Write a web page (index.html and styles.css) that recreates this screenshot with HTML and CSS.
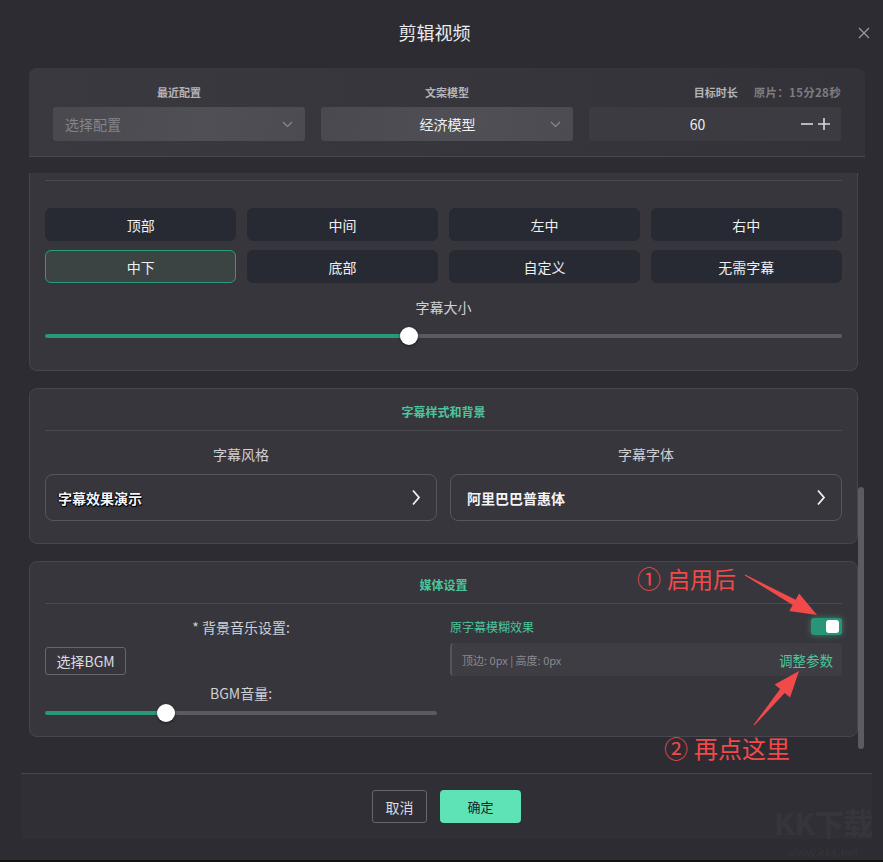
FILE: index.html
```html
<!DOCTYPE html>
<html lang="zh">
<head>
<meta charset="utf-8">
<title>剪辑视频</title>
<link rel="stylesheet" href="styles.css">
</head>
<body>
<div class="dialog">
  <header class="dlg-head">
    <h1 class="dlg-title">剪辑视频</h1>
    <svg class="close" width="12" height="12" viewBox="0 0 12 12"><path d="M1 1L11 11M11 1L1 11" stroke="#9a9a9e" stroke-width="1.3" fill="none"/></svg>
  </header>

  <div class="dlg-body">
    <section class="config">
      <div class="cfg-col">
        <div class="cfg-label">最近配置</div>
        <div class="select light">
          <span class="placeholder">选择配置</span>
          <svg class="chev-down" width="11" height="7" viewBox="0 0 11 7"><path d="M1 1L5.5 5.5L10 1" stroke="#8c8b90" stroke-width="1.1" fill="none"/></svg>
        </div>
      </div>
      <div class="cfg-col">
        <div class="cfg-label">文案模型</div>
        <div class="select light center">
          <span class="value">经济模型</span>
          <svg class="chev-down" width="11" height="7" viewBox="0 0 11 7"><path d="M1 1L5.5 5.5L10 1" stroke="#8c8b90" stroke-width="1.1" fill="none"/></svg>
        </div>
      </div>
      <div class="cfg-col">
        <div class="cfg-label right"><span>目标时长</span><span class="orig">原片：15分28秒</span></div>
        <div class="select dark number">
          <span class="value">60</span>
          <span class="steps">
            <svg width="12" height="12" viewBox="0 0 12 12"><path d="M0 6H12" stroke="#d8d8da" stroke-width="1.6"/></svg>
            <svg width="12" height="12" viewBox="0 0 12 12"><path d="M0 6H12M6 0V12" stroke="#d8d8da" stroke-width="1.6"/></svg>
          </span>
        </div>
      </div>
    </section>

    <div class="scroll-row">
      <div class="cards">
        <section class="card card-cut">
          <div class="divider"></div>
          <div class="pos-grid">
            <button class="pos">顶部</button>
            <button class="pos">中间</button>
            <button class="pos">左中</button>
            <button class="pos">右中</button>
            <button class="pos active">中下</button>
            <button class="pos">底部</button>
            <button class="pos">自定义</button>
            <button class="pos">无需字幕</button>
          </div>
          <div class="field-label size-label">字幕大小</div>
          <div class="slider big">
            <div class="track fill-part"></div>
            <div class="thumb"></div>
            <div class="track rest"></div>
          </div>
        </section>

        <section class="card style-card">
          <div class="card-title">字幕样式和背景</div>
          <div class="divider"></div>
          <div class="two-col">
            <div class="col">
              <div class="field-label">字幕风格</div>
              <div class="pick">
                <span class="pick-text shadowed">字幕效果演示</span>
                <svg width="10" height="17" viewBox="0 0 10 17"><path d="M2 1.5L8 8.5L2 15.5" stroke="#f2f2f2" stroke-width="1.8" fill="none"/></svg>
              </div>
            </div>
            <div class="col">
              <div class="field-label">字幕字体</div>
              <div class="pick">
                <span class="pick-text">阿里巴巴普惠体</span>
                <svg width="10" height="17" viewBox="0 0 10 17"><path d="M2 1.5L8 8.5L2 15.5" stroke="#f2f2f2" stroke-width="1.8" fill="none"/></svg>
              </div>
            </div>
          </div>
        </section>

        <section class="card media-card">
          <div class="card-title">媒体设置</div>
          <div class="divider"></div>
          <div class="two-col">
            <div class="col">
              <div class="field-label bgm-label">* 背景音乐设置:</div>
              <div class="bgm-row"><button class="bgm-btn">选择BGM</button></div>
              <div class="field-label vol-label">BGM音量:</div>
              <div class="slider small">
                <div class="track fill-part"></div>
                <div class="thumb"></div>
                <div class="track rest"></div>
              </div>
            </div>
            <div class="col">
              <div class="blur-row">
                <span class="blur-label">原字幕模糊效果</span>
                <span class="toggle"><span class="knob"></span></span>
              </div>
              <div class="blur-box">
                <span class="blur-info">顶边: 0px | 高度: 0px</span>
                <span class="adjust">调整参数</span>
              </div>
            </div>
          </div>
        </section>
      </div>
      <div class="scrollbar"><div class="sb-thumb"></div></div>
    </div>
  </div>

  <footer class="dlg-foot">
    <button class="btn-cancel">取消</button>
    <button class="btn-ok">确定</button>
  </footer>
</div>

<div class="note note1"><span class="circ">①</span>启用后</div>
<div class="note note2"><span class="circ">②</span>再点这里</div>
<svg class="arrows" width="883" height="862" viewBox="0 0 883 862">
  <polygon fill="#f24a4a" points="745.2,574.6 795.7,599.7 799.1,593.5 817,615 789.3,611.1 792.7,604.9 744.8,575.4"/>
  <polygon fill="#f24a4a" points="754.4,725.3 784.7,692.9 790.1,697.4 799,671 774.7,684.6 780.1,689.1 753.6,724.7"/>
</svg>
<div class="watermark"><div class="wm-logo">KK下载</div><div class="wm-url">www.kkx.net</div></div>
</body>
</html>
```

FILE: styles.css
```css
* { box-sizing: border-box; }
html, body { margin: 0; padding: 0; }
body {
  width: 883px;
  height: 862px;
  background: #2d2c32;
  font-family: "Noto Sans CJK SC", "Noto Sans", sans-serif;
  color: #e6e6e8;
  overflow: hidden;
  position: relative;
  border-bottom: 2px solid #111114;
}
button { font-family: inherit; cursor: pointer; }

.dialog { display: flex; flex-direction: column; height: 860px; }

.dlg-head {
  height: 68px;
  display: flex;
  align-items: center;
  justify-content: center;
  position: relative;
  padding: 0 14px 4px 0;
}
.dlg-title { margin: 0; font-size: 18px; font-weight: 400; color: #ececee; line-height: 24px; }
.close { position: absolute; right: 13px; top: 27px; }

.dlg-body { padding: 0 18px 0 29px; }

/* config */
.config {
  display: grid;
  grid-template-columns: repeat(3, 1fr);
  column-gap: 16px;
  padding: 16px 24px 15px;
  background: linear-gradient(100deg, #3a393f 0%, #36353b 60%, #333238 100%);
  border-radius: 8px 8px 0 0;
  border-bottom: 1px solid #4a494f;
}
.cfg-label {
  height: 16px;
  line-height: 16px;
  font-size: 11px;
  font-weight: 700;
  color: #b4b3b8;
  text-align: center;
  margin-bottom: 7px;
  white-space: nowrap;
}
.cfg-label.right { text-align: right; }
.cfg-label .orig { color: #7d7c82; margin-left: 16px; font-size: 11.5px; letter-spacing: 0.3px; }
.select {
  height: 34px;
  border-radius: 3px;
  display: flex;
  align-items: center;
  padding: 0 12px;
  font-size: 14px;
  position: relative;
}
.select.light { background: linear-gradient(100deg, #4a494f 0%, #504f55 60%, #4c4b51 100%); }
.select.dark { background: #3c3b41; }
.placeholder { color: #85848a; flex: 1; }
.select.center .value { flex: 1; text-align: center; color: #f0f0f2; padding-left: 12px; }
.chev-down { margin-left: auto; margin-right: 0; }
.select.number .value { flex: 1; text-align: center; color: #eeeef0; padding-right: 7px; }
.steps { display: flex; gap: 5px; align-items: center; margin-right: -1px; }

/* scroll area */
.scroll-row { display: flex; height: 594px; }
.cards { width: 829px; padding-top: 16px; display: flex; flex-direction: column; gap: 17px; }
.scrollbar { width: 6px; display: flex; flex-direction: column; justify-content: flex-end; padding-bottom: 2px; }
.sb-thumb { height: 262px; background: #5c5b61; border-radius: 3px; }

.card {
  background: #37363c;
  border: 1px solid #47464c;
  border-radius: 8px;
  padding: 0 15px;
}
.card-cut { border-top: none; border-radius: 0 0 8px 8px; padding-top: 7px; height: 198px; }
.divider { height: 1px; background: #4b4a50; }
.card-title {
  text-align: center;
  font-size: 12px;
  font-weight: 700;
  color: #4cc59c;
  line-height: 20px;
  padding-top: 13px;
  margin-bottom: 8px;
}

.pos-grid {
  display: grid;
  grid-template-columns: repeat(4, 1fr);
  gap: 9px 10.5px;
  margin-top: 27px;
}
.pos {
  height: 33px;
  border: 1px solid #272a33;
  background: #272a33;
  border-radius: 6px;
  color: #eef0f2;
  font-size: 14px;
  padding: 0;
}
.pos.active { background: #3c4443; border-color: #2a9c7b; }

.field-label { text-align: center; font-size: 14px; line-height: 20px; color: #d0cfd4; }
.size-label { margin-top: 14px; }

.slider { display: flex; align-items: center; height: 18px; }
.slider.big { margin-top: 10px; }
.track { height: 4px; background: #5b5a60; border-radius: 2px; }
.fill-part { background: #2b977a; border-radius: 2px 0 0 2px; }
.slider.big .fill-part { width: 356px; }
.slider .rest { flex: 1; border-radius: 0 2px 2px 0; }
.thumb { width: 18px; height: 18px; border-radius: 50%; background: #ffffff; box-shadow: 0 1px 3px rgba(0,0,0,.5); flex: none; margin: 0 -1px; position: relative; }
.slider.small { margin-top: 1px; }
.slider.small .fill-part { width: 113px; }

.two-col { display: grid; grid-template-columns: 1fr 1fr; column-gap: 13px; }

.style-card { padding-bottom: 22px; }
.style-card .field-label { margin-top: 13px; }
.pick {
  margin-top: 10px;
  height: 47px;
  border: 1px solid #57565c;
  border-radius: 8px;
  display: flex;
  align-items: center;
  justify-content: space-between;
  padding: 0 15px 0 16px;
}
.style-card .col:first-child .pick { padding-left: 12px; }
.pick-text { font-size: 14px; font-weight: 700; color: #f4f4f6; }
.pick-text.shadowed { text-shadow: 1px 1px 0 #000, -1px 0 0 #000, 0 1px 1px #000; }

.media-card { padding-bottom: 14px; }
.bgm-label { margin-top: 13px; }
.bgm-row { margin-top: 10px; display: flex; }
.bgm-btn {
  height: 28px;
  padding: 0 10.5px;
  background: transparent;
  border: 1px solid #67666b;
  border-radius: 3px;
  color: #dcdce0;
  font-size: 14px;
}
.vol-label { margin-top: 8px; }

.blur-row { margin-top: 13px; height: 18px; display: flex; align-items: center; justify-content: space-between; }
.blur-label { font-size: 12px; color: #4cc59c; }
.toggle {
  width: 31px; height: 17px;
  background: #2a9479;
  border-radius: 3px;
  display: flex; align-items: center; justify-content: flex-end;
  padding-right: 3px;
  box-shadow: 0 0 6px rgba(70, 210, 160, .45);
}
.knob { width: 13px; height: 13px; background: #fff; border-radius: 3px; }
.blur-box {
  margin-top: 8px;
  height: 33px;
  background: #3e3d43;
  border-left: 2px solid #55545a;
  border-radius: 4px;
  display: flex; align-items: center; justify-content: space-between;
  padding: 0 9px 0 10px;
}
.blur-info { font-size: 11px; color: #8b8a90; }
.adjust { font-size: 13.5px; color: #4cc59c; }

/* footer */
.dlg-foot {
  margin: 22px 11px 0 21px;
  height: 66px;
  border-top: 1px solid #48474d;
  background: #302f35;
  display: flex;
  align-items: center;
  justify-content: center;
  gap: 13px;
}
.btn-cancel {
  width: 55px; height: 33px;
  background: transparent;
  border: 1px solid #67666b;
  border-radius: 3px;
  color: #dcdce0;
  font-size: 14px;
  padding: 0;
}
.btn-ok {
  width: 81px; height: 33px;
  background: #5ee3b6;
  border: none;
  border-radius: 4px;
  color: #1d1d20;
  font-size: 13px;
  padding: 0;
}

/* annotations */
.note {
  position: absolute;
  color: #f24a4a;
  font-size: 23px;
  line-height: 30px;
  display: flex; align-items: center;
}
.note .circ { font-size: 24px; margin-right: 6px; }
.note1 { left: 637px; top: 563px; }
.note2 { left: 664px; top: 733px; font-size: 24px; }
.arrows { position: absolute; left: 0; top: 0; pointer-events: none; }

.watermark { position: absolute; left: 768px; top: 805px; width: 110px; text-align: center; color: rgba(255,255,255,0.035); }
.wm-logo { font-size: 30px; font-weight: 900; line-height: 34px; letter-spacing: -1px; }
.wm-url { font-size: 11px; font-weight: 700; line-height: 14px; margin-top: 6px; }
```
